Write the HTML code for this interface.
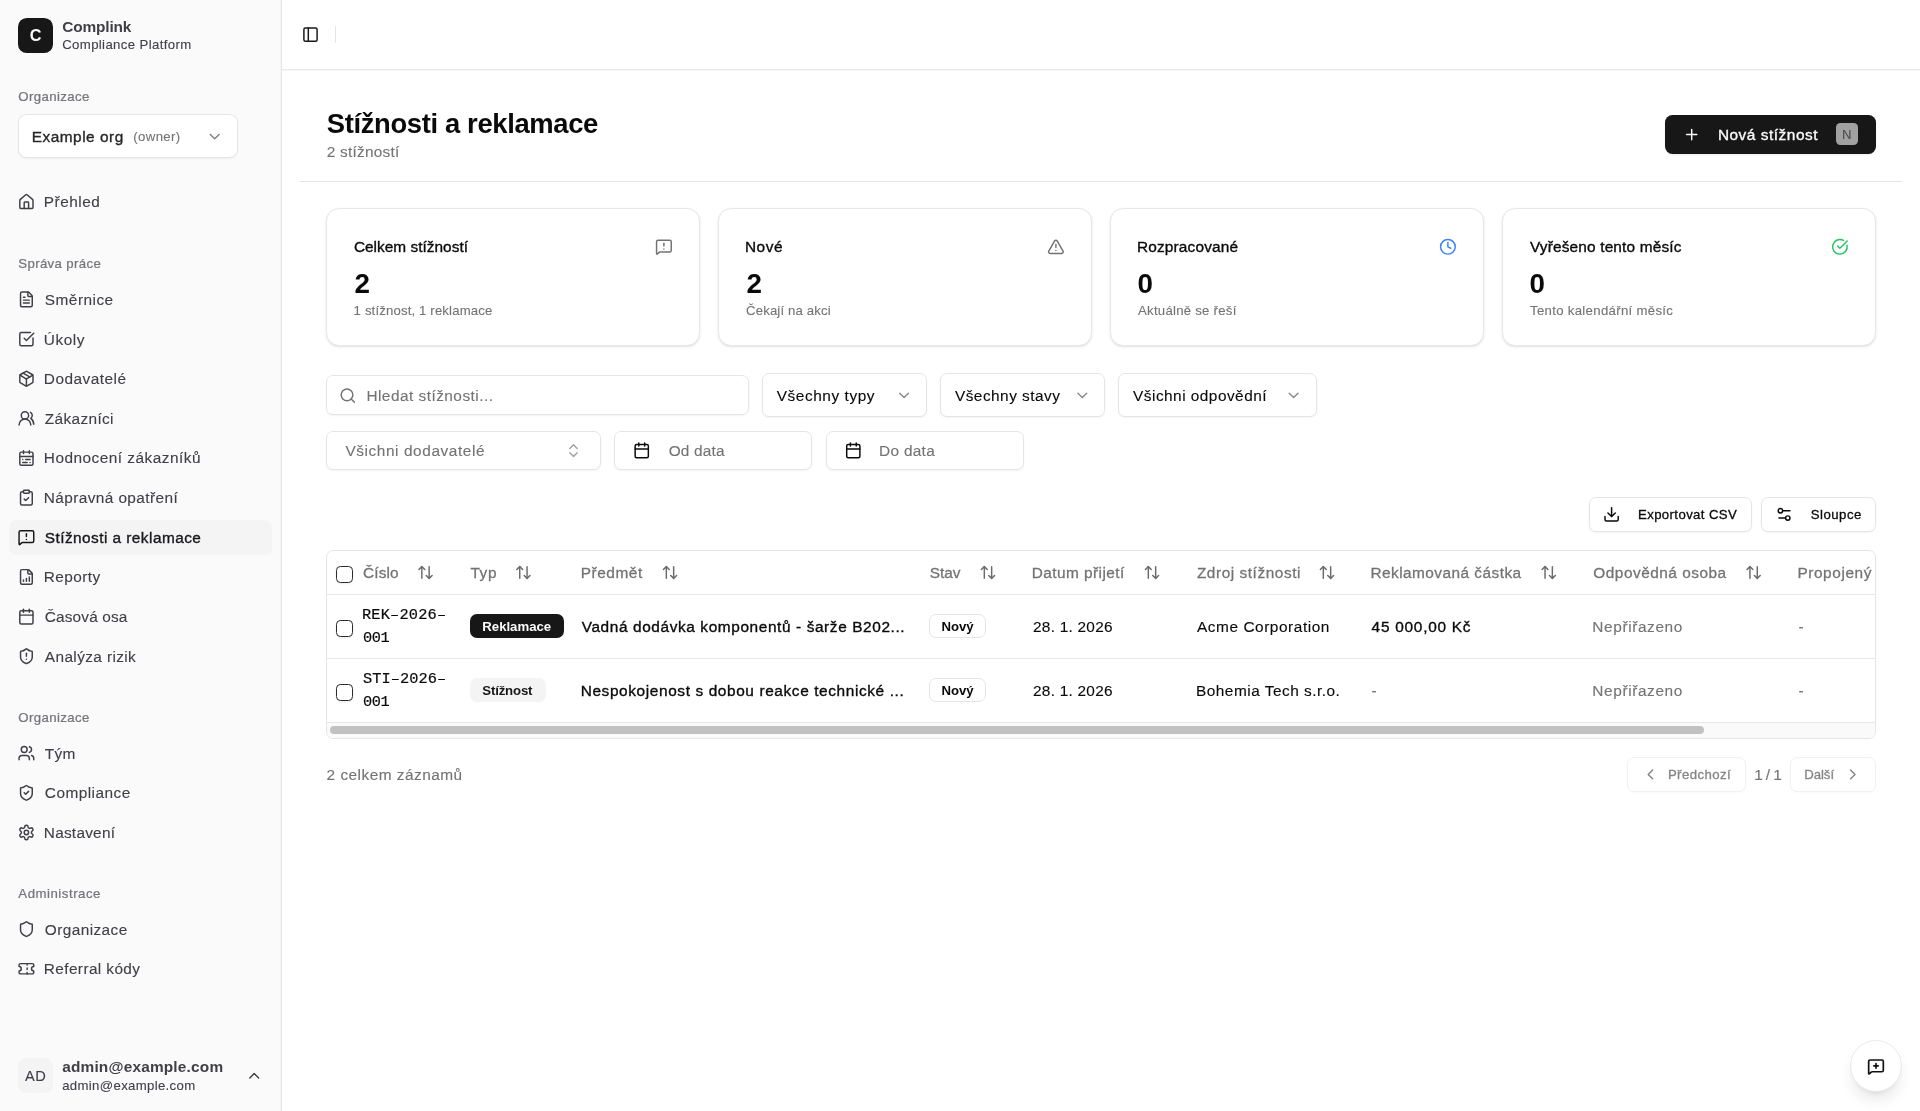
<!DOCTYPE html>
<html lang="cs">
<head>
<meta charset="utf-8">
<title>Stížnosti a reklamace</title>
<style>
*{box-sizing:border-box;margin:0;padding:0}
html,body{width:1920px;height:1111px;overflow:hidden;background:#fff}
body{font-family:"Liberation Sans",sans-serif;color:#0a0a0a;position:relative}
#L{position:absolute;left:0;top:0;width:1920px;height:1111px;will-change:transform}
.a{position:absolute}
.t{position:absolute;white-space:nowrap;line-height:1}
svg{display:block;fill:none;stroke-linecap:round;stroke-linejoin:round}
</style>
</head>
<body>
<div id="L">
<div class="a" style="left:0px;top:0px;width:281px;height:1111px;background:#fafafa"></div>
<div class="a" style="left:280px;top:0px;width:1px;height:1111px;background:#f5f5f5"></div>
<div class="a" style="left:281px;top:0px;width:1px;height:1111px;background:#e6e6e6"></div>
<div class="a" style="left:17.6px;top:17.6px;width:35.2px;height:35.2px;background:#171717;border-radius:8.8px"></div>
<div class="a" style="left:18px;top:114px;width:220px;height:44px;background:#fff;border:1px solid #e5e5e5;border-radius:8.5px;box-shadow:0 1px 2px rgba(0,0,0,.05)"></div>
<div class="a" style="left:9px;top:520px;width:263px;height:35px;background:#f4f4f5;border-radius:7px"></div>
<div class="a" style="left:18px;top:1058px;width:35px;height:35px;background:#f4f4f5;border-radius:8.8px"></div>
<div class="a" style="left:282px;top:69px;width:1638px;height:1px;background:#eaeaea"></div>
<div class="a" style="left:282px;top:70px;width:1638px;height:1px;background:#f5f5f5"></div>
<div class="a" style="left:335px;top:26px;width:1px;height:17px;background:#e5e5e5"></div>
<div class="a" style="left:300px;top:181px;width:1602px;height:1px;background:#e5e5e5"></div>
<div class="a" style="left:1665px;top:115px;width:211px;height:39px;background:#171717;border-radius:7.5px;box-shadow:0 1px 2px rgba(0,0,0,.08)"></div>
<div class="a" style="left:1836px;top:123px;width:22px;height:22px;background:#a1a1a1;border-radius:4.4px"></div>
<div class="a" style="left:326px;top:208px;width:374px;height:138px;background:#fff;border:1px solid #e7e7e7;border-radius:13.2px;box-shadow:0 1px 3px rgba(0,0,0,.10),0 1px 2px -1px rgba(0,0,0,.10)"></div>
<div class="a" style="left:718px;top:208px;width:374px;height:138px;background:#fff;border:1px solid #e7e7e7;border-radius:13.2px;box-shadow:0 1px 3px rgba(0,0,0,.10),0 1px 2px -1px rgba(0,0,0,.10)"></div>
<div class="a" style="left:1110px;top:208px;width:374px;height:138px;background:#fff;border:1px solid #e7e7e7;border-radius:13.2px;box-shadow:0 1px 3px rgba(0,0,0,.10),0 1px 2px -1px rgba(0,0,0,.10)"></div>
<div class="a" style="left:1502px;top:208px;width:374px;height:138px;background:#fff;border:1px solid #e7e7e7;border-radius:13.2px;box-shadow:0 1px 3px rgba(0,0,0,.10),0 1px 2px -1px rgba(0,0,0,.10)"></div>
<div class="a" style="left:326px;top:375px;width:423px;height:40px;background:#fff;border:1px solid #e5e5e5;border-radius:7px;box-shadow:0 1px 2px rgba(0,0,0,.05)"></div>
<div class="a" style="left:762px;top:373px;width:165px;height:44px;background:#fff;border:1px solid #e5e5e5;border-radius:7px;box-shadow:0 1px 2px rgba(0,0,0,.05)"></div>
<div class="a" style="left:940px;top:373px;width:165px;height:44px;background:#fff;border:1px solid #e5e5e5;border-radius:7px;box-shadow:0 1px 2px rgba(0,0,0,.05)"></div>
<div class="a" style="left:1118px;top:373px;width:199px;height:44px;background:#fff;border:1px solid #e5e5e5;border-radius:7px;box-shadow:0 1px 2px rgba(0,0,0,.05)"></div>
<div class="a" style="left:326px;top:431px;width:275px;height:39px;background:#fff;border:1px solid #e5e5e5;border-radius:7px;box-shadow:0 1px 2px rgba(0,0,0,.05)"></div>
<div class="a" style="left:614px;top:431px;width:198px;height:39px;background:#fff;border:1px solid #e5e5e5;border-radius:7px;box-shadow:0 1px 2px rgba(0,0,0,.05)"></div>
<div class="a" style="left:826px;top:431px;width:198px;height:39px;background:#fff;border:1px solid #e5e5e5;border-radius:7px;box-shadow:0 1px 2px rgba(0,0,0,.05)"></div>
<div class="a" style="left:1589px;top:497px;width:163px;height:35px;background:#fff;border:1px solid #e5e5e5;border-radius:7px;box-shadow:0 1px 2px rgba(0,0,0,.05)"></div>
<div class="a" style="left:1761px;top:497px;width:115px;height:35px;background:#fff;border:1px solid #e5e5e5;border-radius:7px;box-shadow:0 1px 2px rgba(0,0,0,.05)"></div>
<div class="a" style="left:326px;top:550px;width:1550px;height:189px;background:#fff;border:1px solid #e5e5e5;border-radius:7px"></div>
<div class="a" style="left:327px;top:594px;width:1548px;height:1px;background:#e8e8e8"></div>
<div class="a" style="left:327px;top:658px;width:1548px;height:1px;background:#e8e8e8"></div>
<div class="a" style="left:327px;top:722px;width:1548px;height:1px;background:#e8e8e8"></div>
<div class="a" style="left:327px;top:723px;width:1548px;height:15px;background:#fafafa;border-radius:0 0 6px 6px"></div>
<div class="a" style="left:330px;top:726px;width:1374px;height:8.4px;background:#c1c1c1;border-radius:4.1px"></div>
<div class="a" style="left:336px;top:566px;width:17.4px;height:17.4px;background:#fff;border:1.4px solid #2b2b2b;border-radius:4.4px;box-shadow:0 1px 2px rgba(0,0,0,.08)"></div>
<div class="a" style="left:336px;top:620px;width:17.4px;height:17.4px;background:#fff;border:1.4px solid #2b2b2b;border-radius:4.4px;box-shadow:0 1px 2px rgba(0,0,0,.08)"></div>
<div class="a" style="left:336px;top:684px;width:17.4px;height:17.4px;background:#fff;border:1.4px solid #2b2b2b;border-radius:4.4px;box-shadow:0 1px 2px rgba(0,0,0,.08)"></div>
<div class="a" style="left:470px;top:614.0px;width:94px;height:24px;background:#171717;border-radius:7px"></div>
<div class="a" style="left:929px;top:614.0px;width:57px;height:24px;background:#fff;border:1px solid #e5e5e5;border-radius:7px"></div>
<div class="a" style="left:470px;top:678.0px;width:76px;height:24px;background:#f4f4f5;border-radius:7px"></div>
<div class="a" style="left:929px;top:678.0px;width:57px;height:24px;background:#fff;border:1px solid #e5e5e5;border-radius:7px"></div>
<div class="a" style="left:1627px;top:757px;width:119px;height:35px;background:#fff;border:1px solid #f0f0f0;border-radius:7px;box-shadow:0 1px 2px rgba(0,0,0,.025)"></div>
<div class="a" style="left:1790px;top:757px;width:86px;height:35px;background:#fff;border:1px solid #f0f0f0;border-radius:7px;box-shadow:0 1px 2px rgba(0,0,0,.025)"></div>
<div class="a" style="left:1850px;top:1040px;width:52px;height:52px;background:#fff;border:1px solid #e8e8e8;border-radius:26px;box-shadow:0 10px 15px -3px rgba(0,0,0,.10),0 4px 6px -4px rgba(0,0,0,.10)"></div>
<svg class="a" style="left:0;top:0;width:1920px;height:1111px" viewBox="0 0 1920 1111">
<g transform="translate(205.90 127.80) scale(0.7333)" stroke="#808084" stroke-width="2"><path d="m6 9 6 6 6-6"/></g>
<g transform="translate(17.60 193.20) scale(0.7333)" stroke="#3f3f46" stroke-width="2"><path d="M15 21v-8a1 1 0 0 0-1-1h-4a1 1 0 0 0-1 1v8"/><path d="M3 10a2 2 0 0 1 .709-1.528l7-5.999a2 2 0 0 1 2.582 0l7 5.999A2 2 0 0 1 21 10v9a2 2 0 0 1-2 2H5a2 2 0 0 1-2-2z"/></g>
<g transform="translate(17.60 290.60) scale(0.7333)" stroke="#3f3f46" stroke-width="2"><path d="M6 22a2 2 0 0 1-2-2V4a2 2 0 0 1 2-2h8a2.4 2.4 0 0 1 1.704.706l3.588 3.588A2.4 2.4 0 0 1 20 8v12a2 2 0 0 1-2 2z"/><path d="M14 2v5a1 1 0 0 0 1 1h5"/><path d="M10 9H8"/><path d="M16 13H8"/><path d="M16 17H8"/></g>
<g transform="translate(17.60 330.25) scale(0.7333)" stroke="#3f3f46" stroke-width="2"><path d="M21 10.5V19a2 2 0 0 1-2 2H5a2 2 0 0 1-2-2V5a2 2 0 0 1 2-2h12.5"/><path d="m9 11 3 3L22 4"/></g>
<g transform="translate(17.60 369.90) scale(0.7333)" stroke="#3f3f46" stroke-width="2"><path d="M11 21.73a2 2 0 0 0 2 0l7-4A2 2 0 0 0 21 16V8a2 2 0 0 0-1-1.73l-7-4a2 2 0 0 0-2 0l-7 4A2 2 0 0 0 3 8v8a2 2 0 0 0 1 1.73z"/><path d="M12 22V12"/><path d="m3.3 7 7.703 4.734a2 2 0 0 0 1.994 0L20.7 7"/><path d="m7.5 4.27 9 5.15"/></g>
<g transform="translate(17.60 409.55) scale(0.7333)" stroke="#3f3f46" stroke-width="2"><path d="M18 21a8 8 0 0 0-16 0"/><circle cx="10" cy="8" r="5"/><path d="M22 20c0-3.37-2-6.5-4-8a5 5 0 0 0-.45-8.3"/></g>
<g transform="translate(17.60 449.20) scale(0.7333)" stroke="#3f3f46" stroke-width="2"><rect width="18" height="18" x="3" y="4" rx="2"/><path d="M16 2v4"/><path d="M3 10h18"/><path d="M8 2v4"/><path d="M17 14h-6"/><path d="M13 18H7"/><path d="M7 14h.01"/><path d="M17 18h.01"/></g>
<g transform="translate(17.60 488.85) scale(0.7333)" stroke="#3f3f46" stroke-width="2"><rect width="8" height="4" x="8" y="2" rx="1" ry="1"/><path d="M16 4h2a2 2 0 0 1 2 2v14a2 2 0 0 1-2 2H6a2 2 0 0 1-2-2V6a2 2 0 0 1 2-2h2"/><path d="m9 14 2 2 4-4"/></g>
<g transform="translate(17.60 528.50) scale(0.7333)" stroke="#18181b" stroke-width="2"><path d="M22 17a2 2 0 0 1-2 2H6.828a2 2 0 0 0-1.414.586l-2.202 2.202A.71.71 0 0 1 2 21.286V5a2 2 0 0 1 2-2h16a2 2 0 0 1 2 2z"/><path d="M12 15h.01"/><path d="M12 7v4"/></g>
<g transform="translate(17.60 568.15) scale(0.7333)" stroke="#3f3f46" stroke-width="2"><path d="M6 22a2 2 0 0 1-2-2V4a2 2 0 0 1 2-2h8a2.4 2.4 0 0 1 1.704.706l3.588 3.588A2.4 2.4 0 0 1 20 8v12a2 2 0 0 1-2 2z"/><path d="M14 2v5a1 1 0 0 0 1 1h5"/><path d="M8 18v-2"/><path d="M12 18v-4"/><path d="M16 18v-6"/></g>
<g transform="translate(17.60 607.80) scale(0.7333)" stroke="#3f3f46" stroke-width="2"><path d="M8 2v4"/><path d="M16 2v4"/><rect width="18" height="18" x="3" y="4" rx="2"/><path d="M3 10h18"/></g>
<g transform="translate(17.60 647.45) scale(0.7333)" stroke="#3f3f46" stroke-width="2"><path d="M20 13c0 5-3.5 7.5-7.66 8.95a1 1 0 0 1-.67-.01C7.5 20.5 4 18 4 13V6a1 1 0 0 1 1-1c2 0 4.5-1.2 6.24-2.72a1.17 1.17 0 0 1 1.52 0C14.51 3.81 17 5 19 5a1 1 0 0 1 1 1z"/><path d="M12 8v4"/><path d="M12 16h.01"/></g>
<g transform="translate(17.60 744.40) scale(0.7333)" stroke="#3f3f46" stroke-width="2"><path d="M16 21v-2a4 4 0 0 0-4-4H6a4 4 0 0 0-4 4v2"/><circle cx="9" cy="7" r="4"/><path d="M22 21v-2a4 4 0 0 0-3-3.87"/><path d="M16 3.13a4 4 0 0 1 0 7.75"/></g>
<g transform="translate(17.60 784.05) scale(0.7333)" stroke="#3f3f46" stroke-width="2"><path d="M20 13c0 5-3.5 7.5-7.66 8.95a1 1 0 0 1-.67-.01C7.5 20.5 4 18 4 13V6a1 1 0 0 1 1-1c2 0 4.5-1.2 6.24-2.72a1.17 1.17 0 0 1 1.52 0C14.51 3.81 17 5 19 5a1 1 0 0 1 1 1z"/><path d="m9 12 2 2 4-4"/></g>
<g transform="translate(17.60 823.70) scale(0.7333)" stroke="#3f3f46" stroke-width="2"><path d="M12.22 2h-.44a2 2 0 0 0-2 2v.18a2 2 0 0 1-1 1.73l-.43.25a2 2 0 0 1-2 0l-.15-.08a2 2 0 0 0-2.73.73l-.22.38a2 2 0 0 0 .73 2.73l.15.1a2 2 0 0 1 1 1.72v.51a2 2 0 0 1-1 1.74l-.15.09a2 2 0 0 0-.73 2.73l.22.38a2 2 0 0 0 2.73.73l.15-.08a2 2 0 0 1 2 0l.43.25a2 2 0 0 1 1 1.73V20a2 2 0 0 0 2 2h.44a2 2 0 0 0 2-2v-.18a2 2 0 0 1 1-1.73l.43-.25a2 2 0 0 1 2 0l.15.08a2 2 0 0 0 2.73-.73l.22-.39a2 2 0 0 0-.73-2.73l-.15-.08a2 2 0 0 1-1-1.74v-.5a2 2 0 0 1 1-1.74l.15-.09a2 2 0 0 0 .73-2.73l-.22-.38a2 2 0 0 0-2.73-.73l-.15.08a2 2 0 0 1-2 0l-.43-.25a2 2 0 0 1-1-1.73V4a2 2 0 0 0-2-2z"/><circle cx="12" cy="12" r="3"/></g>
<g transform="translate(17.60 920.30) scale(0.7333)" stroke="#3f3f46" stroke-width="2"><path d="M20 13c0 5-3.5 7.5-7.66 8.95a1 1 0 0 1-.67-.01C7.5 20.5 4 18 4 13V6a1 1 0 0 1 1-1c2 0 4.5-1.2 6.24-2.72a1.17 1.17 0 0 1 1.52 0C14.51 3.81 17 5 19 5a1 1 0 0 1 1 1z"/></g>
<g transform="translate(17.60 959.95) scale(0.7333)" stroke="#3f3f46" stroke-width="2"><path d="M2 9a3 3 0 0 1 0 6v2a2 2 0 0 0 2 2h16a2 2 0 0 0 2-2v-2a3 3 0 0 1 0-6V7a2 2 0 0 0-2-2H4a2 2 0 0 0-2 2Z"/><path d="M13 5v2"/><path d="M13 17v2"/><path d="M13 11v2"/></g>
<g transform="translate(245.40 1066.90) scale(0.7333)" stroke="#3f3f46" stroke-width="2"><path d="m18 15-6-6-6 6"/></g>
<g transform="translate(301.70 25.80) scale(0.7333)" stroke="#18181b" stroke-width="2"><rect width="18" height="18" x="3" y="3" rx="2"/><path d="M9 3v18"/></g>
<g transform="translate(1682.90 125.80) scale(0.7333)" stroke="#fafafa" stroke-width="2"><path d="M5 12h14"/><path d="M12 5v14"/></g>
<g transform="translate(655.10 238.00) scale(0.7333)" stroke="#737373" stroke-width="2"><path d="M22 17a2 2 0 0 1-2 2H6.828a2 2 0 0 0-1.414.586l-2.202 2.202A.71.71 0 0 1 2 21.286V5a2 2 0 0 1 2-2h16a2 2 0 0 1 2 2z"/><path d="M12 15h.01"/><path d="M12 7v4"/></g>
<g transform="translate(1047.10 238.00) scale(0.7333)" stroke="#737373" stroke-width="2"><path d="m21.73 18-8-14a2 2 0 0 0-3.48 0l-8 14A2 2 0 0 0 4 21h16a2 2 0 0 0 1.73-3"/><path d="M12 9v4"/><path d="M12 17h.01"/></g>
<g transform="translate(1439.10 238.00) scale(0.7333)" stroke="#3b82f6" stroke-width="2"><circle cx="12" cy="12" r="10"/><polyline points="12 6 12 12 16 14"/></g>
<g transform="translate(1831.10 238.00) scale(0.7333)" stroke="#22c55e" stroke-width="2"><path d="M21.801 10A10 10 0 1 1 17 3.335"/><path d="m9 11 3 3L22 4"/></g>
<g transform="translate(338.95 386.80) scale(0.7333)" stroke="#737373" stroke-width="2"><circle cx="11" cy="11" r="8"/><path d="m21 21-4.3-4.3"/></g>
<g transform="translate(895.30 386.60) scale(0.7333)" stroke="#8c8c8c" stroke-width="2"><path d="m6 9 6 6 6-6"/></g>
<g transform="translate(1073.50 386.60) scale(0.7333)" stroke="#8c8c8c" stroke-width="2"><path d="m6 9 6 6 6-6"/></g>
<g transform="translate(1284.80 386.60) scale(0.7333)" stroke="#8c8c8c" stroke-width="2"><path d="m6 9 6 6 6-6"/></g>
<g transform="translate(564.70 441.80) scale(0.7333)" stroke="#a3a3a3" stroke-width="2"><path d="m7 15 5 5 5-5"/><path d="m7 9 5-5 5 5"/></g>
<g transform="translate(632.95 441.60) scale(0.7333)" stroke="#0a0a0a" stroke-width="2"><path d="M8 2v4"/><path d="M16 2v4"/><rect width="18" height="18" x="3" y="4" rx="2"/><path d="M3 10h18"/></g>
<g transform="translate(844.50 441.60) scale(0.7333)" stroke="#0a0a0a" stroke-width="2"><path d="M8 2v4"/><path d="M16 2v4"/><rect width="18" height="18" x="3" y="4" rx="2"/><path d="M3 10h18"/></g>
<g transform="translate(1602.80 505.60) scale(0.7333)" stroke="#0a0a0a" stroke-width="2"><path d="M21 15v4a2 2 0 0 1-2 2H5a2 2 0 0 1-2-2v-4"/><polyline points="7 10 12 15 17 10"/><line x1="12" x2="12" y1="15" y2="3"/></g>
<g transform="translate(1775.30 505.60) scale(0.7333)" stroke="#0a0a0a" stroke-width="2"><path d="M20 7h-9"/><path d="M14 17H5"/><circle cx="17" cy="17" r="3"/><circle cx="7" cy="7" r="3"/></g>
<g transform="translate(416.70 563.70) scale(0.7333)" stroke="#6b6b6b" stroke-width="2"><path d="m21 16-4 4-4-4"/><path d="M17 20V4"/><path d="m3 8 4-4 4 4"/><path d="M7 4v16"/></g>
<g transform="translate(514.60 563.70) scale(0.7333)" stroke="#6b6b6b" stroke-width="2"><path d="m21 16-4 4-4-4"/><path d="M17 20V4"/><path d="m3 8 4-4 4 4"/><path d="M7 4v16"/></g>
<g transform="translate(661.20 563.70) scale(0.7333)" stroke="#6b6b6b" stroke-width="2"><path d="m21 16-4 4-4-4"/><path d="M17 20V4"/><path d="m3 8 4-4 4 4"/><path d="M7 4v16"/></g>
<g transform="translate(979.20 563.70) scale(0.7333)" stroke="#6b6b6b" stroke-width="2"><path d="m21 16-4 4-4-4"/><path d="M17 20V4"/><path d="m3 8 4-4 4 4"/><path d="M7 4v16"/></g>
<g transform="translate(1143.20 563.70) scale(0.7333)" stroke="#6b6b6b" stroke-width="2"><path d="m21 16-4 4-4-4"/><path d="M17 20V4"/><path d="m3 8 4-4 4 4"/><path d="M7 4v16"/></g>
<g transform="translate(1318.20 563.70) scale(0.7333)" stroke="#6b6b6b" stroke-width="2"><path d="m21 16-4 4-4-4"/><path d="M17 20V4"/><path d="m3 8 4-4 4 4"/><path d="M7 4v16"/></g>
<g transform="translate(1539.90 563.70) scale(0.7333)" stroke="#6b6b6b" stroke-width="2"><path d="m21 16-4 4-4-4"/><path d="M17 20V4"/><path d="m3 8 4-4 4 4"/><path d="M7 4v16"/></g>
<g transform="translate(1744.80 563.70) scale(0.7333)" stroke="#6b6b6b" stroke-width="2"><path d="m21 16-4 4-4-4"/><path d="M17 20V4"/><path d="m3 8 4-4 4 4"/><path d="M7 4v16"/></g>
<g transform="translate(1641.60 765.60) scale(0.7333)" stroke="#858585" stroke-width="2"><path d="m15 18-6-6 6-6"/></g>
<g transform="translate(1844.00 765.60) scale(0.7333)" stroke="#858585" stroke-width="2"><path d="m9 18 6-6-6-6"/></g>
<g transform="translate(1867.20 1057.80) scale(0.7333)" stroke="#111" stroke-width="2.3"><path d="M22 17a2 2 0 0 1-2 2H6.828a2 2 0 0 0-1.414.586l-2.202 2.202A.71.71 0 0 1 2 21.286V5a2 2 0 0 1 2-2h16a2 2 0 0 1 2 2z"/><path d="M12 8v6"/><path d="M9 11h6"/></g>
</svg>
<div class="t" style="left:29.70px;top:27.08px;font-size:16.2px;color:#fafafa;font-weight:700;">C</div>
<div class="t" style="left:62.20px;top:18.96px;font-size:15.4px;color:#3f3f46;letter-spacing:-0.136px;font-weight:700;">Complink</div>
<div class="t" style="left:62.20px;top:38.42px;font-size:13.2px;color:#3f3f46;letter-spacing:0.366px;-webkit-text-stroke:0.11px #3f3f46;">Compliance Platform</div>
<div class="t" style="left:18.30px;top:90.42px;font-size:13.2px;color:#74747a;letter-spacing:0.411px;-webkit-text-stroke:0.24px #74747a;">Organizace</div>
<div class="t" style="left:31.70px;top:129.06px;font-size:15.4px;color:#27272a;letter-spacing:0.516px;-webkit-text-stroke:0.35px #27272a;">Example org</div>
<div class="t" style="left:133.30px;top:130.12px;font-size:13.2px;color:#737373;letter-spacing:0.365px;-webkit-text-stroke:0.11px #737373;">(owner)</div>
<div class="t" style="left:43.80px;top:194.46px;font-size:15.4px;color:#3f3f46;letter-spacing:0.502px;-webkit-text-stroke:0.12px #3f3f46;">Přehled</div>
<div class="t" style="left:44.80px;top:291.86px;font-size:15.4px;color:#3f3f46;letter-spacing:0.479px;-webkit-text-stroke:0.12px #3f3f46;">Směrnice</div>
<div class="t" style="left:43.80px;top:331.51px;font-size:15.4px;color:#3f3f46;letter-spacing:0.528px;-webkit-text-stroke:0.12px #3f3f46;">Úkoly</div>
<div class="t" style="left:43.80px;top:371.16px;font-size:15.4px;color:#3f3f46;letter-spacing:0.489px;-webkit-text-stroke:0.12px #3f3f46;">Dodavatelé</div>
<div class="t" style="left:44.80px;top:410.81px;font-size:15.4px;color:#3f3f46;letter-spacing:0.357px;-webkit-text-stroke:0.12px #3f3f46;">Zákazníci</div>
<div class="t" style="left:43.80px;top:450.46px;font-size:15.4px;color:#3f3f46;letter-spacing:0.480px;-webkit-text-stroke:0.12px #3f3f46;">Hodnocení zákazníků</div>
<div class="t" style="left:43.80px;top:490.11px;font-size:15.4px;color:#3f3f46;letter-spacing:0.400px;-webkit-text-stroke:0.12px #3f3f46;">Nápravná opatření</div>
<div class="t" style="left:44.80px;top:529.76px;font-size:15.4px;color:#18181b;letter-spacing:0.447px;-webkit-text-stroke:0.35px #18181b;">Stížnosti a reklamace</div>
<div class="t" style="left:43.80px;top:569.41px;font-size:15.4px;color:#3f3f46;letter-spacing:0.418px;-webkit-text-stroke:0.12px #3f3f46;">Reporty</div>
<div class="t" style="left:44.80px;top:609.06px;font-size:15.4px;color:#3f3f46;letter-spacing:0.143px;-webkit-text-stroke:0.12px #3f3f46;">Časová osa</div>
<div class="t" style="left:44.80px;top:648.71px;font-size:15.4px;color:#3f3f46;letter-spacing:0.384px;-webkit-text-stroke:0.12px #3f3f46;">Analýza rizik</div>
<div class="t" style="left:44.80px;top:745.66px;font-size:15.4px;color:#3f3f46;letter-spacing:0.252px;-webkit-text-stroke:0.12px #3f3f46;">Tým</div>
<div class="t" style="left:44.80px;top:785.31px;font-size:15.4px;color:#3f3f46;letter-spacing:0.466px;-webkit-text-stroke:0.12px #3f3f46;">Compliance</div>
<div class="t" style="left:43.80px;top:824.96px;font-size:15.4px;color:#3f3f46;letter-spacing:0.235px;-webkit-text-stroke:0.12px #3f3f46;">Nastavení</div>
<div class="t" style="left:44.80px;top:921.56px;font-size:15.4px;color:#3f3f46;letter-spacing:0.417px;-webkit-text-stroke:0.12px #3f3f46;">Organizace</div>
<div class="t" style="left:43.80px;top:961.21px;font-size:15.4px;color:#3f3f46;letter-spacing:0.389px;-webkit-text-stroke:0.12px #3f3f46;">Referral kódy</div>
<div class="t" style="left:18.30px;top:257.32px;font-size:13.2px;color:#74747a;letter-spacing:0.363px;-webkit-text-stroke:0.24px #74747a;">Správa práce</div>
<div class="t" style="left:18.30px;top:711.12px;font-size:13.2px;color:#74747a;letter-spacing:0.411px;-webkit-text-stroke:0.24px #74747a;">Organizace</div>
<div class="t" style="left:18.30px;top:886.92px;font-size:13.2px;color:#74747a;letter-spacing:0.538px;-webkit-text-stroke:0.24px #74747a;">Administrace</div>
<div class="t" style="left:25.00px;top:1068.54px;font-size:14.6px;color:#3f3f46;letter-spacing:0.466px;-webkit-text-stroke:0.12px #3f3f46;">AD</div>
<div class="t" style="left:62.20px;top:1059.06px;font-size:15.4px;color:#3f3f46;letter-spacing:0.190px;font-weight:700;">admin@example.com</div>
<div class="t" style="left:62.20px;top:1078.62px;font-size:13.2px;color:#3f3f46;letter-spacing:0.329px;-webkit-text-stroke:0.11px #3f3f46;">admin@example.com</div>
<div class="t" style="left:326.80px;top:109.80px;font-size:27.4px;color:#0a0a0a;letter-spacing:-0.358px;font-weight:700;">Stížnosti a reklamace</div>
<div class="t" style="left:326.80px;top:144.36px;font-size:15.4px;color:#737373;letter-spacing:0.233px;-webkit-text-stroke:0.12px #737373;">2 stížností</div>
<div class="t" style="left:1717.90px;top:127.16px;font-size:15.4px;color:#fafafa;letter-spacing:0.528px;-webkit-text-stroke:0.35px #fafafa;">Nová stížnost</div>
<div class="t" style="left:1841.90px;top:127.82px;font-size:13.2px;color:#4d4d4d;-webkit-text-stroke:0.11px #4d4d4d;">N</div>
<div class="t" style="left:353.90px;top:238.76px;font-size:15.4px;color:#0a0a0a;letter-spacing:0.021px;-webkit-text-stroke:0.35px #0a0a0a;">Celkem stížností</div>
<div class="t" style="left:354.50px;top:269.96px;font-size:27.8px;color:#0a0a0a;font-weight:700;">2</div>
<div class="t" style="left:353.60px;top:304.02px;font-size:13.2px;color:#737373;letter-spacing:0.143px;-webkit-text-stroke:0.11px #737373;">1 stížnost, 1 reklamace</div>
<div class="t" style="left:744.90px;top:238.76px;font-size:15.4px;color:#0a0a0a;letter-spacing:0.544px;-webkit-text-stroke:0.35px #0a0a0a;">Nové</div>
<div class="t" style="left:746.50px;top:269.96px;font-size:27.8px;color:#0a0a0a;font-weight:700;">2</div>
<div class="t" style="left:746.00px;top:304.02px;font-size:13.2px;color:#737373;letter-spacing:0.146px;-webkit-text-stroke:0.11px #737373;">Čekají na akci</div>
<div class="t" style="left:1136.90px;top:238.76px;font-size:15.4px;color:#0a0a0a;letter-spacing:0.174px;-webkit-text-stroke:0.35px #0a0a0a;">Rozpracované</div>
<div class="t" style="left:1137.50px;top:269.96px;font-size:27.8px;color:#0a0a0a;font-weight:700;">0</div>
<div class="t" style="left:1138.00px;top:304.02px;font-size:13.2px;color:#737373;letter-spacing:0.254px;-webkit-text-stroke:0.11px #737373;">Aktuálně se řeší</div>
<div class="t" style="left:1529.90px;top:238.76px;font-size:15.4px;color:#0a0a0a;letter-spacing:0.175px;-webkit-text-stroke:0.35px #0a0a0a;">Vyřešeno tento měsíc</div>
<div class="t" style="left:1529.50px;top:269.96px;font-size:27.8px;color:#0a0a0a;font-weight:700;">0</div>
<div class="t" style="left:1530.00px;top:304.02px;font-size:13.2px;color:#737373;letter-spacing:0.312px;-webkit-text-stroke:0.11px #737373;">Tento kalendářní měsíc</div>
<div class="t" style="left:366.40px;top:387.76px;font-size:15.4px;color:#737373;letter-spacing:0.474px;-webkit-text-stroke:0.12px #737373;">Hledat stížnosti...</div>
<div class="t" style="left:776.70px;top:387.76px;font-size:15.4px;color:#0a0a0a;letter-spacing:0.569px;-webkit-text-stroke:0.12px #0a0a0a;">Všechny typy</div>
<div class="t" style="left:954.90px;top:387.76px;font-size:15.4px;color:#0a0a0a;letter-spacing:0.489px;-webkit-text-stroke:0.12px #0a0a0a;">Všechny stavy</div>
<div class="t" style="left:1133.10px;top:387.76px;font-size:15.4px;color:#0a0a0a;letter-spacing:0.475px;-webkit-text-stroke:0.12px #0a0a0a;">Všichni odpovědní</div>
<div class="t" style="left:345.40px;top:442.76px;font-size:15.4px;color:#737373;letter-spacing:0.586px;-webkit-text-stroke:0.12px #737373;">Všichni dodavatelé</div>
<div class="t" style="left:668.70px;top:442.76px;font-size:15.4px;color:#737373;letter-spacing:0.183px;-webkit-text-stroke:0.12px #737373;">Od data</div>
<div class="t" style="left:879.10px;top:442.76px;font-size:15.4px;color:#737373;letter-spacing:0.292px;-webkit-text-stroke:0.12px #737373;">Do data</div>
<div class="t" style="left:1638.00px;top:507.52px;font-size:13.2px;color:#0a0a0a;letter-spacing:0.383px;-webkit-text-stroke:0.30px #0a0a0a;">Exportovat CSV</div>
<div class="t" style="left:1810.80px;top:507.52px;font-size:13.2px;color:#0a0a0a;letter-spacing:0.480px;-webkit-text-stroke:0.30px #0a0a0a;">Sloupce</div>
<div class="t" style="left:362.90px;top:564.96px;font-size:15.4px;color:#737373;letter-spacing:0.174px;-webkit-text-stroke:0.28px #737373;">Číslo</div>
<div class="t" style="left:470.40px;top:564.96px;font-size:15.4px;color:#737373;letter-spacing:0.677px;-webkit-text-stroke:0.28px #737373;">Typ</div>
<div class="t" style="left:580.70px;top:564.96px;font-size:15.4px;color:#737373;letter-spacing:0.552px;-webkit-text-stroke:0.28px #737373;">Předmět</div>
<div class="t" style="left:929.70px;top:564.96px;font-size:15.4px;color:#737373;letter-spacing:-0.034px;-webkit-text-stroke:0.28px #737373;">Stav</div>
<div class="t" style="left:1031.70px;top:564.96px;font-size:15.4px;color:#737373;letter-spacing:0.445px;-webkit-text-stroke:0.28px #737373;">Datum přijetí</div>
<div class="t" style="left:1196.90px;top:564.96px;font-size:15.4px;color:#737373;letter-spacing:0.552px;-webkit-text-stroke:0.28px #737373;">Zdroj stížnosti</div>
<div class="t" style="left:1370.40px;top:564.96px;font-size:15.4px;color:#737373;letter-spacing:0.465px;-webkit-text-stroke:0.28px #737373;">Reklamovaná částka</div>
<div class="t" style="left:1593.30px;top:564.96px;font-size:15.4px;color:#737373;letter-spacing:0.498px;-webkit-text-stroke:0.28px #737373;">Odpovědná osoba</div>
<div class="t" style="left:1797.40px;top:564.96px;font-size:15.4px;color:#737373;letter-spacing:0.587px;-webkit-text-stroke:0.28px #737373;">Propojený</div>
<div class="t" style="left:362.00px;top:608.48px;font-size:15.3px;color:#0a0a0a;letter-spacing:0.195px;-webkit-text-stroke:0.21px #0a0a0a;font-family:'Liberation Mono',monospace;">REK–2026–</div>
<div class="t" style="left:363.00px;top:630.98px;font-size:15.3px;color:#0a0a0a;letter-spacing:-0.380px;-webkit-text-stroke:0.21px #0a0a0a;font-family:'Liberation Mono',monospace;">001</div>
<div class="t" style="left:482.30px;top:619.92px;font-size:13.2px;color:#fafafa;letter-spacing:-0.011px;font-weight:700;">Reklamace</div>
<div class="t" style="left:581.70px;top:618.66px;font-size:15.4px;color:#0a0a0a;letter-spacing:0.610px;-webkit-text-stroke:0.35px #0a0a0a;">Vadná dodávka komponentů - šarže B202...</div>
<div class="t" style="left:941.40px;top:620.02px;font-size:13.2px;color:#0a0a0a;letter-spacing:-0.038px;font-weight:700;">Nový</div>
<div class="t" style="left:1033.00px;top:618.66px;font-size:15.4px;color:#0a0a0a;letter-spacing:0.254px;-webkit-text-stroke:0.12px #0a0a0a;">28. 1. 2026</div>
<div class="t" style="left:1197.00px;top:618.66px;font-size:15.4px;color:#0a0a0a;letter-spacing:0.555px;-webkit-text-stroke:0.12px #0a0a0a;">Acme Corporation</div>
<div class="t" style="left:1371.60px;top:618.66px;font-size:15.4px;color:#0a0a0a;letter-spacing:0.745px;-webkit-text-stroke:0.35px #0a0a0a;">45 000,00 Kč</div>
<div class="t" style="left:1592.30px;top:618.66px;font-size:15.4px;color:#737373;letter-spacing:0.622px;-webkit-text-stroke:0.12px #737373;">Nepřiřazeno</div>
<div class="t" style="left:1798.60px;top:618.66px;font-size:15.4px;color:#737373;-webkit-text-stroke:0.12px #737373;">-</div>
<div class="t" style="left:363.00px;top:672.48px;font-size:15.3px;color:#0a0a0a;letter-spacing:0.070px;-webkit-text-stroke:0.21px #0a0a0a;font-family:'Liberation Mono',monospace;">STI–2026–</div>
<div class="t" style="left:363.00px;top:694.98px;font-size:15.3px;color:#0a0a0a;letter-spacing:-0.380px;-webkit-text-stroke:0.21px #0a0a0a;font-family:'Liberation Mono',monospace;">001</div>
<div class="t" style="left:482.30px;top:683.92px;font-size:13.2px;color:#171717;letter-spacing:-0.156px;font-weight:700;">Stížnost</div>
<div class="t" style="left:580.70px;top:682.66px;font-size:15.4px;color:#0a0a0a;letter-spacing:0.618px;-webkit-text-stroke:0.35px #0a0a0a;">Nespokojenost s dobou reakce technické ...</div>
<div class="t" style="left:941.40px;top:684.02px;font-size:13.2px;color:#0a0a0a;letter-spacing:-0.038px;font-weight:700;">Nový</div>
<div class="t" style="left:1033.00px;top:682.66px;font-size:15.4px;color:#0a0a0a;letter-spacing:0.254px;-webkit-text-stroke:0.12px #0a0a0a;">28. 1. 2026</div>
<div class="t" style="left:1196.00px;top:682.66px;font-size:15.4px;color:#0a0a0a;letter-spacing:0.495px;-webkit-text-stroke:0.12px #0a0a0a;">Bohemia Tech s.r.o.</div>
<div class="t" style="left:1371.60px;top:682.66px;font-size:15.4px;color:#737373;-webkit-text-stroke:0.12px #737373;">-</div>
<div class="t" style="left:1592.30px;top:682.66px;font-size:15.4px;color:#737373;letter-spacing:0.622px;-webkit-text-stroke:0.12px #737373;">Nepřiřazeno</div>
<div class="t" style="left:1798.60px;top:682.66px;font-size:15.4px;color:#737373;-webkit-text-stroke:0.12px #737373;">-</div>
<div class="t" style="left:326.60px;top:767.16px;font-size:15.4px;color:#737373;letter-spacing:0.483px;-webkit-text-stroke:0.12px #737373;">2 celkem záznamů</div>
<div class="t" style="left:1667.90px;top:767.62px;font-size:13.2px;color:#858585;letter-spacing:0.423px;-webkit-text-stroke:0.30px #858585;">Předchozí</div>
<div class="t" style="left:1754.20px;top:766.76px;font-size:15.4px;color:#737373;letter-spacing:-0.597px;-webkit-text-stroke:0.12px #737373;">1 / 1</div>
<div class="t" style="left:1804.20px;top:767.62px;font-size:13.2px;color:#858585;letter-spacing:-0.045px;-webkit-text-stroke:0.30px #858585;">Další</div>
</div>
</body>
</html>
